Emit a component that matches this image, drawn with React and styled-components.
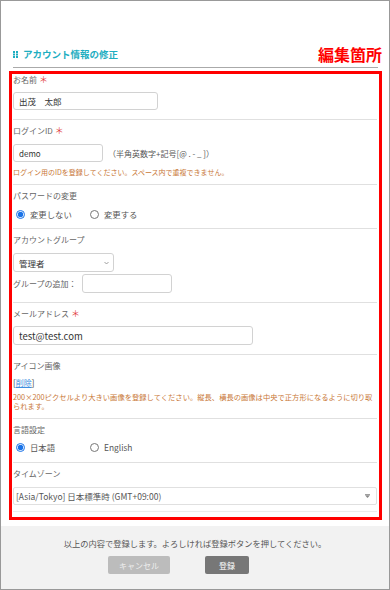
import React from 'react';
import styled, { createGlobalStyle } from 'styled-components';

const GlobalStyle = createGlobalStyle`
  html, body {
    margin: 0;
    padding: 0;
    background: #fff;
  }
  body {
    font-family: "Noto Sans CJK JP", "Noto Sans", sans-serif;
  }
  * {
    box-sizing: border-box;
  }
`;

const Frame = styled.div`
  width: 390px;
  height: 590px;
  border: 1px solid #999;
  display: flex;
  flex-direction: column;
  background: #fff;
  font-size: 8px;
`;

const Main = styled.main`
  flex: 1;
  padding: 44px 7px 0 8px;
`;

const HeaderRow = styled.div`
  display: flex;
  align-items: center;
  justify-content: space-between;
  height: 23px;
  margin: 0 4px;
  padding-bottom: 4px;
  border-bottom: 1px solid #aaa;
`;

const Title = styled.h1`
  display: flex;
  align-items: center;
  gap: 5px;
  margin: 0;
  font-size: 9.5px;
  font-weight: bold;
  color: #1eaec1;
  line-height: 12px;
`;

const EditLabel = styled.span`
  font-size: 16px;
  font-weight: bold;
  line-height: 18px;
  color: #f00;
  margin-right: -4px;
`;

const EditBox = styled.div`
  margin-top: 3px;
  border: 3px solid #f00;
  padding: 0 2px 5px 1px;
`;

const Section = styled.section`
  padding: ${p => p.$pt ?? 5}px 0 ${p => p.$pb ?? 9}px;
  border-bottom: 1px solid ${p => (p.$soft ? '#ececec' : '#e0e0e0')};
`;

const Label = styled.div`
  font-size: 8px;
  line-height: 12px;
  color: #666;
  margin-bottom: ${p => p.$mb ?? 6}px;
`;

const Required = styled.span`
  color: #e2413f;
  font-size: 9px;
  margin-left: 2px;
`;

const TextInput = styled.input`
  display: block;
  width: ${p => p.$w}px;
  height: ${p => p.$h ?? 19}px;
  margin: 0;
  border: 1px solid #d2d2d2;
  border-radius: 3px;
  padding: 0 5px;
  font-family: inherit;
  font-size: ${p => p.$fs ?? 8.5}px;
  color: #333;
  background: #fff;
  outline: none;
`;

const InlineRow = styled.div`
  display: flex;
  align-items: center;
  gap: ${p => p.$gap ?? 5}px;
  margin-top: ${p => p.$mt ?? 0}px;
`;

const Hint = styled.span`
  font-size: 8px;
  color: #555;
  white-space: nowrap;
`;

const Note = styled.p`
  margin: ${p => p.$mt ?? 5}px 0 0;
  font-size: ${p => p.$fs ?? 7}px;
  line-height: ${p => p.$lh ?? 10}px;
  color: #c97838;
`;

const SmallLabel = styled.span`
  font-size: 8px;
  color: #666;
`;

const RadioGroup = styled.div`
  display: flex;
  align-items: center;
  height: 12px;
  padding-left: 3px;
`;

const RadioItem = styled.label`
  display: flex;
  align-items: center;
  gap: 5px;
  width: 74px;
  font-size: 8.4px;
  color: #555;
`;

const Radio = styled.input`
  width: 9px;
  height: 9px;
  margin: 0;
  accent-color: #1a73e8;
`;

const SelectWrap = styled.div`
  position: relative;
  width: ${p => p.$w};
  height: ${p => p.$h}px;
`;

const Select = styled.select`
  display: block;
  appearance: none;
  -webkit-appearance: none;
  width: 100%;
  height: 100%;
  margin: 0;
  border: 1px solid ${p => (p.$light ? '#e0e0e0' : '#d2d2d2')};
  border-radius: ${p => (p.$light ? 2 : 3)}px;
  padding: 0 ${p => (p.$light ? 2 : 5)}px;
  font-family: inherit;
  font-size: 8.5px;
  color: ${p => (p.$light ? '#555' : '#333')};
  background: #fff;
  outline: none;
`;

const SelectIcon = styled.svg`
  position: absolute;
  top: 50%;
  right: ${p => p.$right}px;
  transform: translateY(-50%);
  pointer-events: none;
`;

const LinkLine = styled.div`
  font-size: 8px;
  line-height: 12px;
  color: #333;
`;

const Link = styled.a`
  color: #3d8ee0;
  text-decoration: underline;
`;

const Footer = styled.footer`
  height: 63px;
  background: #f2f2f2;
  padding-top: 11px;
`;

const FooterText = styled.p`
  margin: 0;
  text-align: center;
  font-size: 8.25px;
  line-height: 12px;
  color: #555;
`;

const ButtonRow = styled.div`
  display: flex;
  gap: 35px;
  margin-top: 7px;
  padding-left: 107px;
`;

const Button = styled.button`
  width: ${p => p.$w}px;
  height: 18px;
  border: none;
  border-radius: 2px;
  padding: 0;
  font-family: inherit;
  font-size: 8px;
  background: ${p => (p.$primary ? '#777' : '#bcbcbc')};
  color: ${p => (p.$primary ? '#fff' : '#eee')};
`;

const DotsIcon = () => (
  <svg width="5" height="7" viewBox="0 0 5 7">
    {[0, 2.5, 5].map(y => (
      <React.Fragment key={y}>
        <rect x="0" y={y} width="2" height="2" fill="#1eaec1" />
        <rect x="3" y={y} width="2" height="2" fill="#1eaec1" />
      </React.Fragment>
    ))}
  </svg>
);

const App = () => (
  <>
    <GlobalStyle />
    <Frame>
      <Main>
        <HeaderRow>
          <Title>
            <DotsIcon />
            アカウント情報の修正
          </Title>
          <EditLabel>編集箇所</EditLabel>
        </HeaderRow>

        <EditBox>
          <Section $pt={0} $pb={9}>
            <Label>お名前<Required>＊</Required></Label>
            <TextInput $w={145} $h={18} defaultValue="出茂　太郎" />
          </Section>

          <Section $pb={7}>
            <Label $mb={7}>ログインID<Required>＊</Required></Label>
            <InlineRow $gap={5}>
              <TextInput $w={90} $h={18} $fs={8} defaultValue="demo" />
              <Hint>（半角英数字+記号[@ . - _ ]）</Hint>
            </InlineRow>
            <Note>ログイン用のIDを登録してください。スペース内で重複できません。</Note>
          </Section>

          <Section $pb={8}>
            <Label>パスワードの変更</Label>
            <RadioGroup>
              <RadioItem><Radio type="radio" name="pw" defaultChecked />変更しない</RadioItem>
              <RadioItem><Radio type="radio" name="pw" />変更する</RadioItem>
            </RadioGroup>
          </Section>

          <Section>
            <Label $mb={7}>アカウントグループ</Label>
            <SelectWrap $w="101px" $h={19}>
              <Select defaultValue="admin">
                <option value="admin">管理者</option>
                <option value="user">一般</option>
              </Select>
              <SelectIcon $right={5} width="5" height="3" viewBox="0 0 5 3">
                <path d="M0.5 0.5 L2.5 2.5 L4.5 0.5" fill="none" stroke="#888" strokeWidth="0.8" />
              </SelectIcon>
            </SelectWrap>
            <InlineRow $mt={2} $gap={5}>
              <SmallLabel>グループの追加：</SmallLabel>
              <TextInput $w={90} />
            </InlineRow>
          </Section>

          <Section>
            <Label>メールアドレス<Required>＊</Required></Label>
            <TextInput $w={240} $fs={9.5} defaultValue="test@test.com" />
          </Section>

          <Section $pb={7}>
            <Label $mb={5}>アイコン画像</Label>
            <LinkLine>[<Link href="#">削除</Link>]</LinkLine>
            <Note $mt={3.5} $fs={7.3} $lh={9.4}>
              200×200ピクセルより大きい画像を登録してください。縦長、横長の画像は中央で正方形になるように切り取られます。
            </Note>
          </Section>

          <Section>
            <Label $mb={5}>言語設定</Label>
            <RadioGroup>
              <RadioItem><Radio type="radio" name="lang" defaultChecked />日本語</RadioItem>
              <RadioItem><Radio type="radio" name="lang" />English</RadioItem>
            </RadioGroup>
          </Section>

          <Section $pb={6} $soft>
            <Label $mb={7}>タイムゾーン</Label>
            <SelectWrap $w="100%" $h={18}>
              <Select $light defaultValue="tokyo">
                <option value="tokyo">[Asia/Tokyo] 日本標準時 (GMT+09:00)</option>
              </Select>
              <SelectIcon $right={7} width="5" height="4" viewBox="0 0 5 4">
                <rect x="0" y="0" width="5" height="0.8" fill="#888" />
                <path d="M0 1.3 L5 1.3 L2.5 4 Z" fill="#888" />
              </SelectIcon>
            </SelectWrap>
          </Section>
        </EditBox>
      </Main>

      <Footer>
        <FooterText>以上の内容で登録します。よろしければ登録ボタンを押してください。</FooterText>
        <ButtonRow>
          <Button $w={62}>キャンセル</Button>
          <Button $w={44} $primary>登録</Button>
        </ButtonRow>
      </Footer>
    </Frame>
  </>
);

export default App;
